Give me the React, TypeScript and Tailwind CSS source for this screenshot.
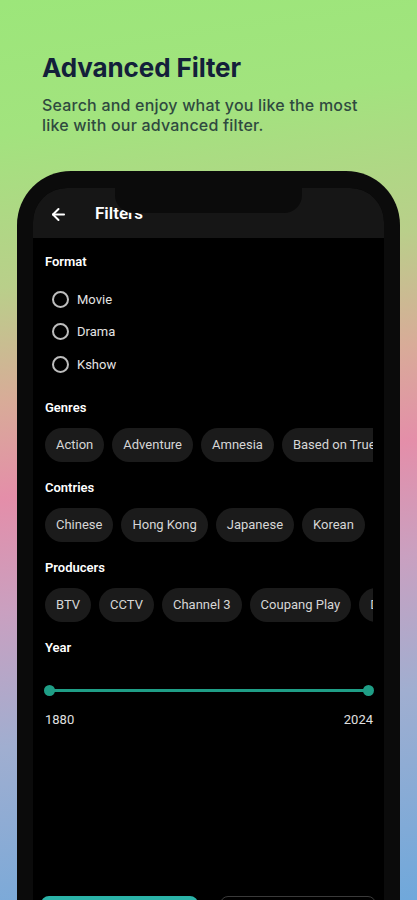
import { ArrowLeft } from 'lucide-react'

const formats = ['Movie', 'Drama', 'Kshow']
const genres = ['Action', 'Adventure', 'Amnesia', 'Based on True Story']
const countries = ['Chinese', 'Hong Kong', 'Japanese', 'Korean', 'Taiwanese']
const producers = ['BTV', 'CCTV', 'Channel 3', 'Coupang Play', 'Disney+']

function Chips({ items }: { items: string[] }) {
  return (
    <div className="flex gap-2 overflow-hidden">
      {items.map((c) => (
        <div
          key={c}
          className="h-[34px] shrink-0 rounded-full bg-[#1b1b1b] px-[11px] flex items-center text-[13px] text-[#d6d6d6] whitespace-nowrap"
        >
          {c}
        </div>
      ))}
    </div>
  )
}

function Label({ children, className = '' }: { children: string; className?: string }) {
  return <div className={`h-4 text-[13px] leading-4 font-semibold text-white ${className}`}>{children}</div>
}

export default function App() {
  return (
    <div className="h-[900px] w-[417px] overflow-hidden bg-[linear-gradient(172deg,#9ce67a_0%,#a2e37e_14%,#b9cf8a_30%,#d8ab98_42%,#e48ea9_52%,#c9a0c0_64%,#a0aed0_78%,#6fa8db_100%)] font-['Roboto',sans-serif]">
      <div className="px-[42px] pt-[52px] font-['Inter',sans-serif]">
        <h1 className="text-[26px] leading-8 font-bold text-[#13203a] tracking-[-0.1px]">Advanced Filter</h1>
        <p className="mt-[11px] text-[16px] leading-5 font-medium tracking-[0.2px] text-[#2f4a3f]">
          Search and enjoy what you like the most
          <br />
          like with our advanced filter.
        </p>
      </div>

      <div className="mx-[17px] mt-[36px] rounded-t-[54px] bg-[#0b0b0b] px-4 pt-[17px] h-[760px]">
        <div className="relative h-full rounded-t-[34px] bg-black overflow-hidden">
          <div className="h-[50px] bg-[#161616] flex items-center pl-[16px] pt-[2px]">
            <ArrowLeft size={19} strokeWidth={2.5} className="text-white" />
            <span className="ml-[27px] text-[17px] font-semibold text-white">Filters</span>
          </div>
          <div className="absolute left-[82px] top-0 w-[187px] h-[25px] rounded-b-[18px] bg-[#0b0b0b]" />

          <div className="pl-3 pr-[11px] pt-4">
            <Label>Format</Label>
            <div className="mt-[13px] pl-[7px]">
              {formats.map((f) => (
                <div key={f} className="h-[32.5px] flex items-center">
                  <div className="w-[17px] h-[17px] rounded-full border-2 border-[#bdbdbd]" />
                  <span className="ml-2 text-[13px] text-[#e4e4e4]">{f}</span>
                </div>
              ))}
            </div>

            <Label className="mt-[19px]">Genres</Label>
            <div className="mt-3">
              <Chips items={genres} />
            </div>

            <Label className="mt-[18px]">Contries</Label>
            <div className="mt-3">
              <Chips items={countries} />
            </div>

            <Label className="mt-[18px]">Producers</Label>
            <div className="mt-3">
              <Chips items={producers} />
            </div>

            <Label className="mt-[18px]">Year</Label>
            <div className="mt-[29px] relative h-[11px] flex items-center">
              <div className="h-[3px] w-full bg-[#1f9e86]" />
              <div className="absolute -left-[1px] top-0 w-[11px] h-[11px] rounded-full bg-[#1f9e86]" />
              <div className="absolute -right-[1px] top-0 w-[11px] h-[11px] rounded-full bg-[#1f9e86]" />
            </div>
            <div className="mt-4 flex justify-between text-[13px] leading-4 text-[#e0e0e0]">
              <span>1880</span>
              <span>2024</span>
            </div>

            <div className="mt-[168px] -mx-1 flex gap-[22px]">
              <div className="h-[44px] w-[157px] rounded-lg bg-[#2bb3a8]" />
              <div className="h-[44px] w-[156px] rounded-lg border border-[#3a3a3a]" />
            </div>
          </div>
        </div>
      </div>
    </div>
  )
}
